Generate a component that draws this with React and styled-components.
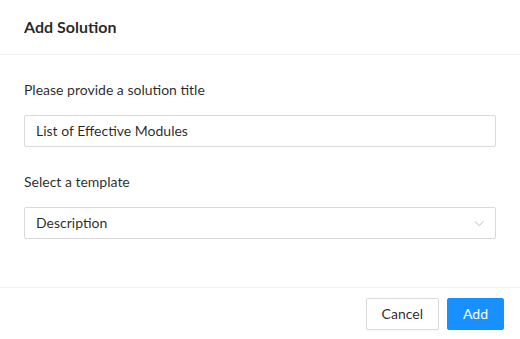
import styled, { createGlobalStyle } from "styled-components";

const Global = createGlobalStyle`
  body {
    margin: 0;
    background: #fff;
    font-family: Lato, "Noto Sans", sans-serif;
    font-size: 14px;
    color: rgba(0, 0, 0, 0.85);
    overflow: hidden;
  }
`;

const Modal = styled.div`
  width: 520px;
  height: 340px;
  display: flex;
  flex-direction: column;
  background: #fff;
`;

const Header = styled.div`
  padding: 16px 24px;
  border-bottom: 1px solid #f0f0f0;
`;

const Title = styled.div`
  font-size: 16px;
  font-weight: 700;
  line-height: 22px;
`;

const Body = styled.div`
  flex: 1;
  padding: 24px 24px 0;
`;

const Label = styled.div`
  line-height: 22px;
  margin-bottom: 14px;
  margin-top: ${(p) => p.top || 0}px;
`;

const Field = styled.div`
  height: 32px;
  box-sizing: border-box;
  border: 1px solid #d9d9d9;
  border-radius: 2px;
  padding: 0 11px;
  display: flex;
  align-items: center;
  justify-content: space-between;
  line-height: 22px;
`;

const Footer = styled.div`
  border-top: 1px solid #f0f0f0;
  padding: 10px 16px;
  display: flex;
  justify-content: flex-end;
  gap: 8px;
`;

const Button = styled.button`
  height: 32px;
  padding: 4px 15px;
  font-family: inherit;
  font-size: 14px;
  line-height: 22px;
  border-radius: 2px;
  border: 1px solid ${(p) => (p.primary ? "#1890ff" : "#d9d9d9")};
  background: ${(p) => (p.primary ? "#1890ff" : "#fff")};
  color: ${(p) => (p.primary ? "#fff" : "rgba(0, 0, 0, 0.85)")};
  box-shadow: 0 2px 0 rgba(0, 0, 0, 0.016);
`;

const Arrow = () => (
  <svg width="12" height="12" viewBox="0 0 12 12" fill="none">
    <path d="M3 4.5 L7.25 8.5 L11.5 4.5" stroke="#bfbfbf" strokeWidth="1" />
  </svg>
);

export default function App() {
  return (
    <Modal>
      <Global />
      <Header>
        <Title>Add Solution</Title>
      </Header>
      <Body>
        <Label>Please provide a solution title</Label>
        <Field>List of Effective Modules</Field>
        <Label top={24}>Select a template</Label>
        <Field>
          Description
          <Arrow />
        </Field>
      </Body>
      <Footer>
        <Button>Cancel</Button>
        <Button primary>Add</Button>
      </Footer>
    </Modal>
  );
}
